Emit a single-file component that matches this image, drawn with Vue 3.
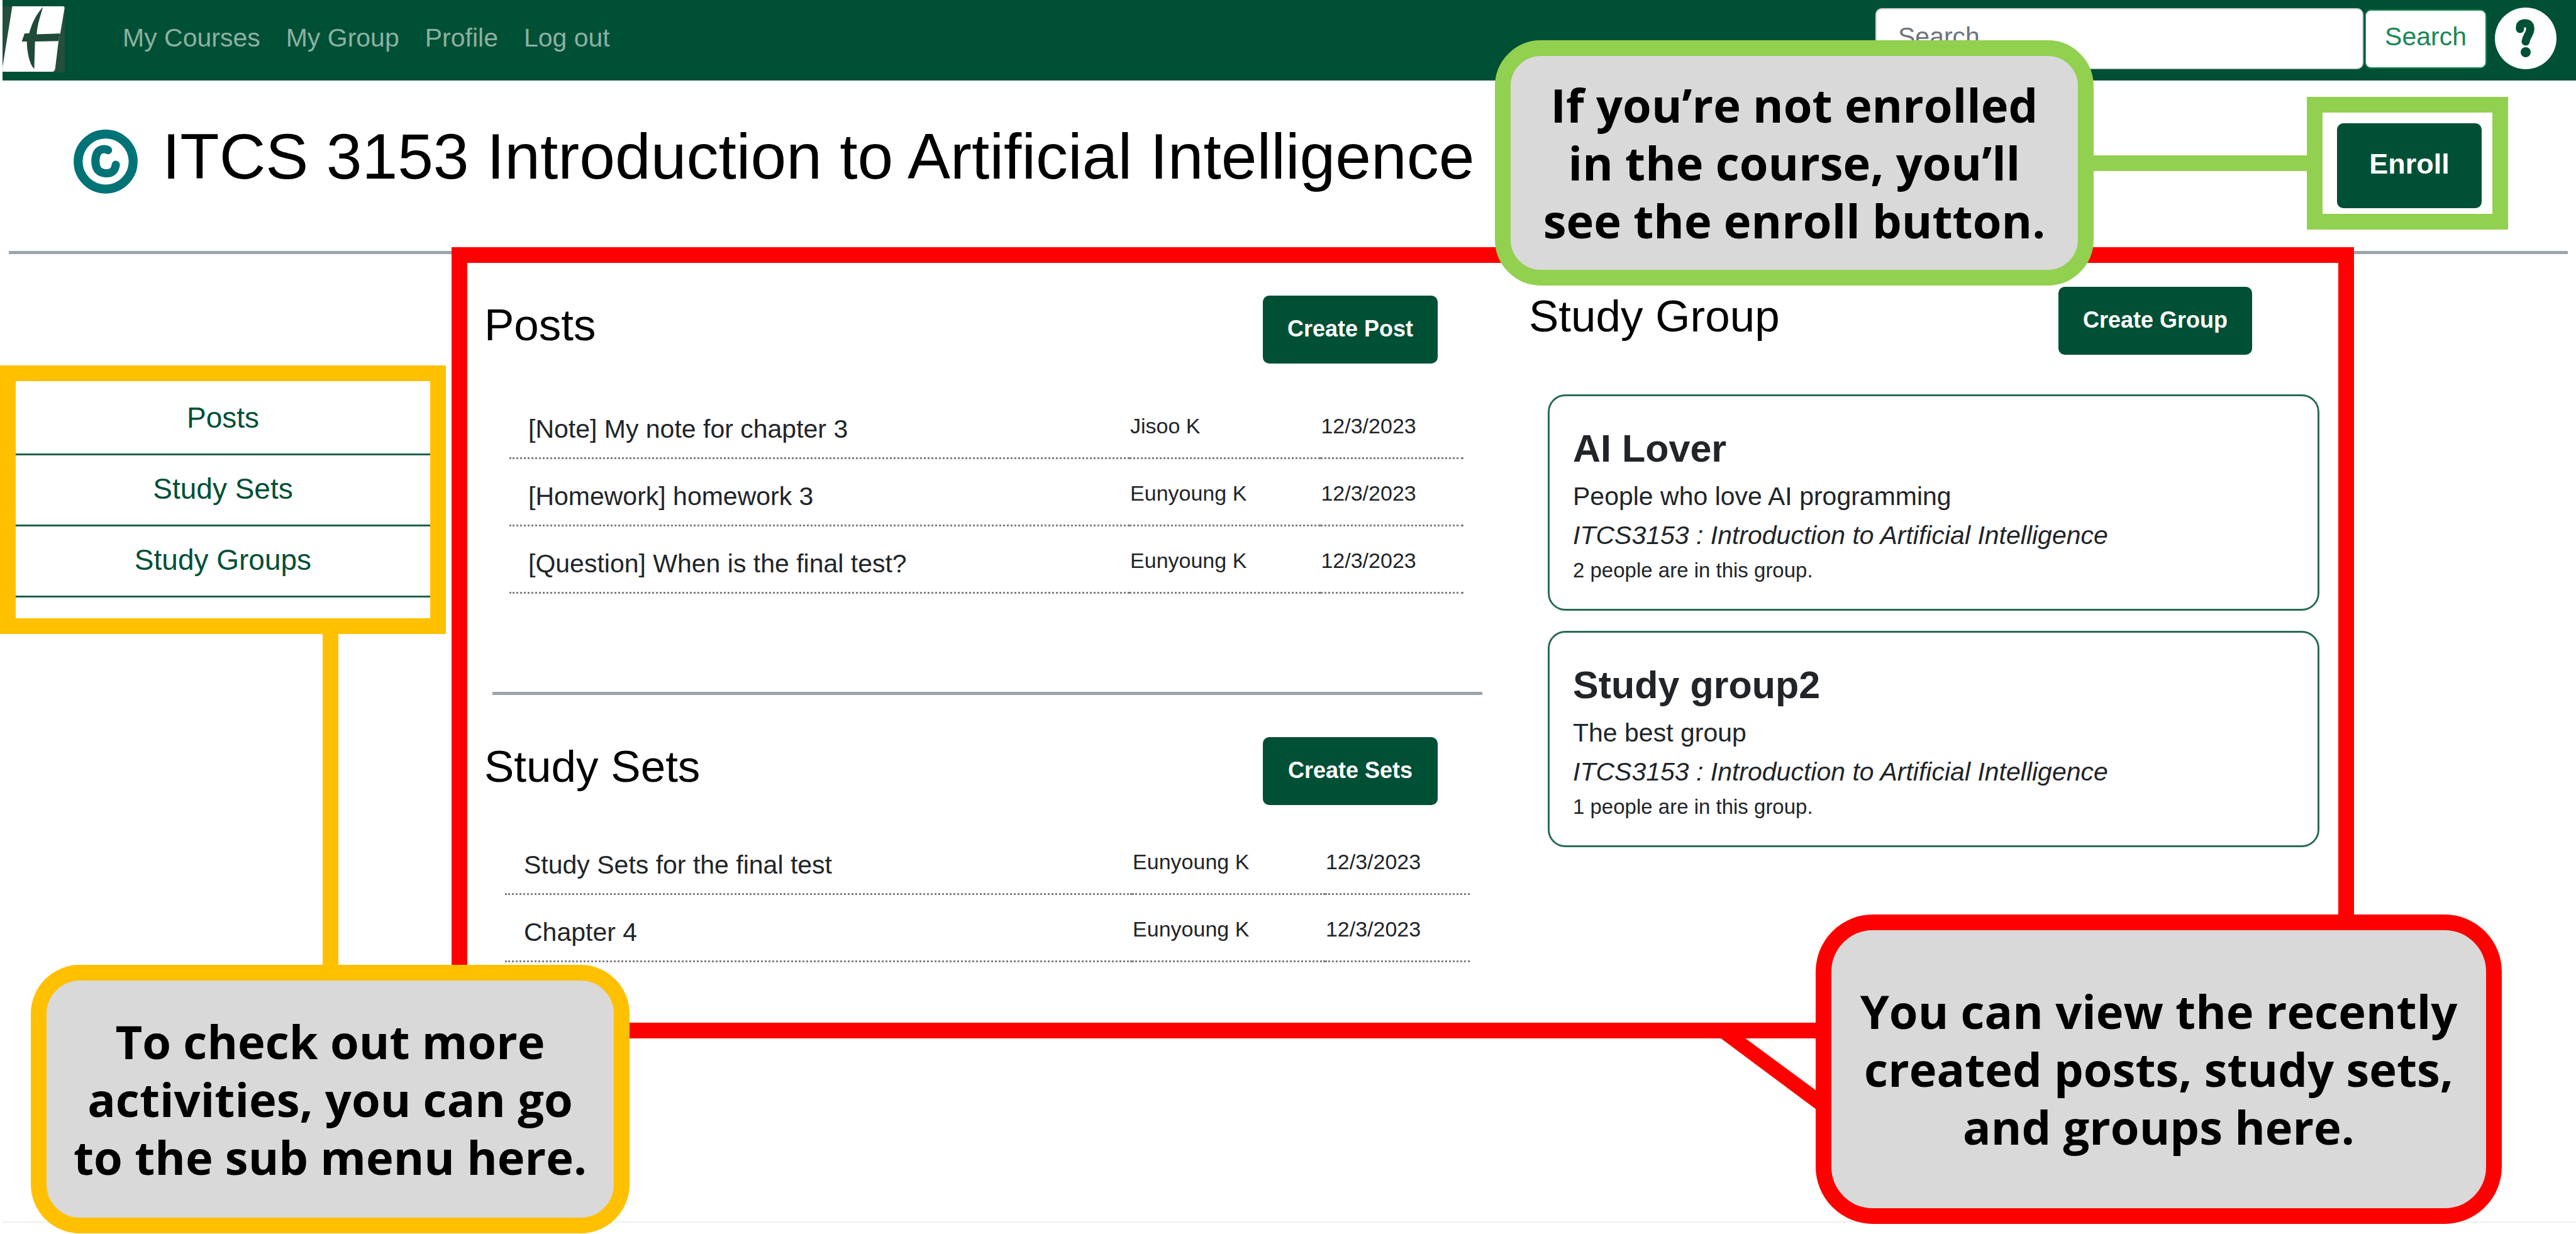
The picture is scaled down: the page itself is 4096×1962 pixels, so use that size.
<script setup>
const navLinks = ['My Courses', 'My Group', 'Profile', 'Log out']
const subMenu = ['Posts', 'Study Sets', 'Study Groups']

const posts = [
  { title: '[Note] My note for chapter 3', author: 'Jisoo K', date: '12/3/2023' },
  { title: '[Homework] homework 3', author: 'Eunyoung K', date: '12/3/2023' },
  { title: '[Question] When is the final test?', author: 'Eunyoung K', date: '12/3/2023' },
]

const studySets = [
  { title: 'Study Sets for the final test', author: 'Eunyoung K', date: '12/3/2023' },
  { title: 'Chapter 4', author: 'Eunyoung K', date: '12/3/2023' },
]

const groups = [
  { name: 'AI Lover', about: 'People who love AI programming', members: 2 },
  { name: 'Study group2', about: 'The best group', members: 1 },
]
const groupCourse = 'ITCS3153 : Introduction to Artificial Intelligence'
</script>

<template>
  <div class="page">
    <header class="navbar">
      <a href="#" class="brand" aria-label="Home">
        <svg viewBox="12 33 320 340" width="99" height="105" aria-hidden="true">
          <rect x="12" y="33" width="320" height="340" fill="#234f3c" />
          <path d="M62 33H322Q332 33 331 44L309 172L300 214L283 353Q280 370 268 370H12V345Z" fill="#fff" />
          <path
            d="M220 36C180 80 160 130 149 172L125 173L111 214H137C138 270 150 330 175 355L179 214L300 212L309 173L188 177C190 130 205 90 220 36Z"
            fill="#1f4a38"
          />
        </svg>
      </a>
      <nav class="nav-links" aria-label="Main">
        <a v-for="link in navLinks" :key="link" href="#">{{ link }}</a>
      </nav>
      <form class="search" role="search" @submit.prevent>
        <input type="search" placeholder="Search" aria-label="Search" />
        <button type="submit">Search</button>
      </form>
      <button type="button" class="help" aria-label="Help">
        <svg viewBox="0 0 98 98" width="98" height="98" aria-hidden="true">
          <circle cx="49" cy="49" r="49" fill="#fff" />
          <path
            d="M40 34C39 27 43 25 48 25C55 25 57 30 56 36C55 43 50 46 49 54"
            fill="none"
            stroke="#005035"
            stroke-width="13"
            stroke-linecap="round"
            stroke-linejoin="round"
          />
          <circle cx="49" cy="71" r="8" fill="#005035" />
        </svg>
      </button>
    </header>

    <div class="course">
      <div class="course-name">
        <svg class="course-icon" viewBox="376 662 328 332" width="102" height="103" aria-hidden="true">
          <circle cx="540" cy="829" r="141" fill="none" stroke="#007377" stroke-width="46" />
          <path
            d="M552 771C538 762 508 762 496 786C484 812 484 850 500 872C520 894 560 894 578 878C586 870 590 860 592 846"
            fill="none"
            stroke="#007377"
            stroke-width="42"
            stroke-linecap="round"
          />
        </svg>
        <h1>ITCS 3153 Introduction to Artificial Intelligence</h1>
      </div>
      <div class="enroll-spot">
        <button type="button" class="btn btn-enroll">Enroll</button>
      </div>
    </div>
    <hr class="rule course-rule" />

    <div class="body">
      <nav class="sub-menu" aria-label="Course">
        <a v-for="item in subMenu" :key="item" href="#">{{ item }}</a>
      </nav>

      <main class="recent">
        <div class="column column-lists">
          <section>
            <div class="section-head">
              <h2>Posts</h2>
              <button type="button" class="btn">Create Post</button>
            </div>
            <table class="list list-posts">
              <tbody>
                <tr v-for="post in posts" :key="post.title">
                  <td class="title">{{ post.title }}</td>
                  <td class="author">{{ post.author }}</td>
                  <td class="date">{{ post.date }}</td>
                </tr>
              </tbody>
            </table>
          </section>
          <hr class="rule list-rule" />
          <section>
            <div class="section-head">
              <h2>Study Sets</h2>
              <button type="button" class="btn">Create Sets</button>
            </div>
            <table class="list list-sets">
              <tbody>
                <tr v-for="set in studySets" :key="set.title">
                  <td class="title">{{ set.title }}</td>
                  <td class="author">{{ set.author }}</td>
                  <td class="date">{{ set.date }}</td>
                </tr>
              </tbody>
            </table>
          </section>
        </div>

        <section class="column column-groups">
          <div class="section-head">
            <h2>Study Group</h2>
            <button type="button" class="btn">Create Group</button>
          </div>
          <div class="cards">
            <article v-for="group in groups" :key="group.name" class="card">
              <h3>{{ group.name }}</h3>
              <p>{{ group.about }}</p>
              <p class="card-course">{{ groupCourse }}</p>
              <p class="card-members">{{ group.members }} people are in this group.</p>
            </article>
          </div>
        </section>
      </main>
    </div>

    <footer class="footer"></footer>

    <aside class="note note-enroll">
      <p>If you’re not enrolled<br />in the course, you’ll<br />see the enroll button.</p>
    </aside>
    <aside class="note note-menu">
      <p>To check out more<br />activities, you can go<br />to the sub menu here.</p>
    </aside>
    <aside class="note note-recent">
      <svg class="tail" viewBox="0 0 153 114" width="153" height="114" aria-hidden="true">
        <path d="M0 0H39L153 84V114Z" fill="#ff0000" />
      </svg>
      <p>You can view the recently<br />created posts, study sets,<br />and groups here.</p>
    </aside>
  </div>
</template>

<style>
body {
  background: #fff;
}
</style>

<style scoped>
.page {
  --green: #005035;
  --lime: #92d050;
  --amber: #ffc000;
  --red: #ff0000;
  position: relative;
  display: flex;
  flex-direction: column;
  min-height: 100vh;
  box-sizing: border-box;
  padding-left: 4px;
  overflow: hidden;
  font-family: Arial, "Liberation Sans", sans-serif;
  color: #212529;
}

h1,
h2,
h3,
p {
  margin: 0;
}

button,
input {
  font-family: inherit;
}

/* Top bar */
.navbar {
  display: flex;
  align-items: flex-start;
  padding: 10px 31px 13px 0;
  background: var(--green);
}

.brand svg,
.help svg {
  display: block;
}

.nav-links {
  display: flex;
  gap: 41px;
  margin-left: 92px;
  padding-top: 19px;
  font-size: 41px;
  line-height: 62px;
}

.nav-links a {
  color: #8cb0a3;
  text-decoration: none;
}

.search {
  display: flex;
  align-items: center;
  gap: 2px;
  flex: 0 1 972px;
  margin: 3px 13px 0 auto;
}

.search input {
  flex: 1;
  min-width: 0;
  height: 97px;
  box-sizing: border-box;
  padding: 0 34px 6px;
  border: 2px solid #ced4da;
  border-radius: 10px;
  background: #fff;
  font-size: 41px;
  color: #212529;
}

.search input::placeholder {
  color: #6c757d;
  opacity: 1;
}

.search button {
  height: 94px;
  padding: 0 30px 6px;
  border: 2px solid #198754;
  border-radius: 10px;
  background: #fff;
  font-size: 41px;
  color: #198754;
}

.help {
  margin-top: 2px;
  padding: 0;
  border: 0;
  background: none;
}

/* Course heading */
.course {
  display: flex;
  align-items: center;
  justify-content: space-between;
  height: 271px;
  padding: 0 150px 0 113px;
}

.course-name {
  display: flex;
  align-items: center;
  gap: 39px;
  padding-bottom: 30px;
}

.course-icon {
  margin-top: 16px;
}

h1 {
  font-size: 102px;
  font-weight: 400;
  line-height: 122px;
  color: #000;
}

.btn {
  min-width: 278px;
  height: 108px;
  padding: 0 39px 2px;
  border: 0;
  border-radius: 10px;
  background: var(--green);
  font-size: 36px;
  font-weight: 700;
  color: #fff;
}

.btn-enroll {
  min-width: 230px;
  height: 135px;
  padding: 0 36px 5px;
  font-size: 45px;
}

.enroll-spot {
  position: relative;
}

.enroll-spot::after {
  content: "";
  position: absolute;
  inset: -42px -42px -34px -48px;
  border: 25px solid var(--lime);
  pointer-events: none;
}

.rule {
  height: 5px;
  border: 0;
  background: #9ca5ad;
}

.course-rule {
  width: auto;
  margin: 0 13px 0 10px;
}

/* Body */
.body {
  display: flex;
  align-items: flex-start;
  margin-left: -4px;
}

.sub-menu {
  position: relative;
  flex: 0 0 709px;
  box-sizing: border-box;
  margin-top: 177px;
  padding: 30px 0 58px;
  text-align: center;
}

.sub-menu::after {
  content: "";
  position: absolute;
  inset: 0;
  border: 25px solid var(--amber);
  pointer-events: none;
}

.sub-menu a {
  display: block;
  padding: 18px 0 22px;
  border-bottom: 3px solid #1f614a;
  font-size: 46px;
  line-height: 70px;
  color: var(--green);
  text-decoration: none;
}

.recent {
  position: relative;
  display: flex;
  flex: 1;
  gap: 74px;
  margin: 0 353px 0 9px;
  padding: 0 55px 121px 52px;
}

.recent::before {
  content: "";
  position: absolute;
  inset: -11px 0 0;
  border: 25px solid var(--red);
  pointer-events: none;
}

.column-lists {
  flex: 1587 1 0;
  padding-top: 66px;
}

.column-groups {
  flex: 1257 1 0;
  padding-top: 52px;
}

.section-head {
  display: flex;
  align-items: center;
  justify-content: space-between;
  padding-right: 71px;
}

.column-groups .section-head {
  padding-right: 107px;
}

h2 {
  padding-bottom: 14px;
  font-size: 71px;
  font-weight: 400;
  line-height: 86px;
  color: #000;
}

.list {
  table-layout: fixed;
  border-spacing: 0;
}

.list-posts {
  width: calc(100% - 70px);
  margin: 45px 0 0 40px;
}

.list-sets {
  width: calc(100% - 53px);
  margin: 36px 0 0 33px;
}

.list td {
  height: 107px;
  box-sizing: border-box;
  border-bottom: 3px dotted #808080;
  vertical-align: top;
  line-height: 62px;
}

.list .title {
  width: 65%;
  padding: 28px 0 0 30px;
  font-size: 41px;
}

.list .author,
.list .date {
  width: 20%;
  padding: 23px 0 0 1px;
  font-size: 34px;
}

.list .date {
  width: 15%;
}

.list-rule {
  margin: 156px 0 67px 13px;
}

.cards {
  display: flex;
  flex-direction: column;
  gap: 32px;
  margin: 63px 0 0 30px;
}

.card {
  padding: 46px 37px 36px;
  border: 3px solid #2a6b53;
  border-radius: 28px;
  font-size: 41px;
  line-height: 62px;
}

h3 {
  margin-bottom: 8px;
  font-size: 61px;
  font-weight: 700;
  line-height: 74px;
}

.card-course {
  font-style: italic;
}

.card-members {
  font-size: 33px;
  line-height: 50px;
}

.footer {
  height: 18px;
  margin-top: auto;
  border-top: 2px solid #eee;
}

/* Guide notes laid over the page */
.note {
  position: absolute;
  display: flex;
  align-items: center;
  justify-content: center;
  box-sizing: border-box;
  border: 25px solid;
  background: #d9d9d9;
  text-align: center;
}

.note p {
  font-family: "Open Sans", sans-serif;
  font-size: 74px;
  font-weight: 700;
  line-height: 92px;
  white-space: nowrap;
  color: #000;
}

.note-enroll {
  top: 64px;
  right: 767px;
  width: 952px;
  height: 390px;
  border-color: var(--lime);
  border-radius: 73px;
}

.note-enroll::after {
  content: "";
  position: absolute;
  top: 158px;
  left: calc(100% + 20px);
  width: 350px;
  height: 25px;
  background: var(--lime);
}

.note-menu {
  top: 1534px;
  left: 49px;
  width: 952px;
  height: 427px;
  border-color: var(--amber);
  border-radius: 78px;
}

.note-menu::before {
  content: "";
  position: absolute;
  bottom: calc(100% + 20px);
  left: 439px;
  width: 25px;
  height: 536px;
  background: var(--amber);
}

.note-recent {
  top: 1454px;
  right: 118px;
  width: 1091px;
  height: 492px;
  border-color: var(--red);
  border-radius: 91px;
}

.tail {
  position: absolute;
  top: 171px;
  right: calc(100% + 24px);
}
</style>
